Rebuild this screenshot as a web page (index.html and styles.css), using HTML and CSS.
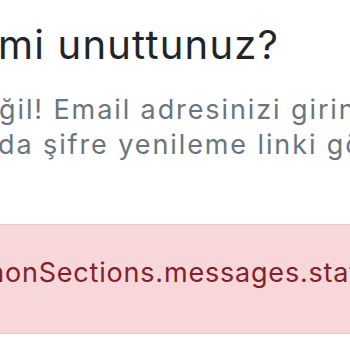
FILE: index.html
```html
<!DOCTYPE html>
<html lang="tr">
<head>
<meta charset="utf-8">
<title>Şifrenizi mi unuttunuz?</title>
<link rel="stylesheet" href="styles.css">
</head>
<body>
<main class="page">
  <h1 class="title">mi unuttunuz?</h1>
  <p class="lead">
    <span class="line line-1">ğil! Email adresinizi girin, size</span>
    <span class="line line-2">da şifre yenileme linki gönderelim.</span>
  </p>
  <div class="alert" role="alert">
    <span class="alert-text">monSections.messages.status</span>
  </div>
</main>
</body>
</html>
```
FILE: styles.css
```css
* { box-sizing: border-box; }
html, body { margin: 0; padding: 0; background: #fff; }
body {
  font-family: Inter, "Noto Sans", "Liberation Sans", sans-serif;
  overflow: hidden;
  width: 350px;
  height: 350px;
}
.page {
  display: flex;
  flex-direction: column;
  padding-top: 21px;
}
.title {
  margin: 0;
  font-size: 40px;
  font-weight: 400;
  line-height: 48px;
  letter-spacing: 1.2px;
  color: #212529;
  white-space: nowrap;
  margin-left: -2px;
}
.lead {
  margin: 23px 0 0;
  font-size: 27px;
  line-height: 35px;
  letter-spacing: 1.9px;
  color: #6c757d;
  display: flex;
  flex-direction: column;
}
.line { white-space: nowrap; }
.line-1 { margin-left: -1px; }
.line-2 { margin-left: -2px; }
.alert {
  margin-top: 62px;
  height: 110px;
  padding: 30px 0 0;
  background: #f8d7da;
  border-top: 1px solid #f5c2c7;
  border-bottom: 1px solid #f5c2c7;
  color: #842029;
  font-size: 27px;
  line-height: 35px;
  letter-spacing: 0.8px;
  white-space: nowrap;
}
.alert-text { display: block; margin-left: -19.5px; }
```
